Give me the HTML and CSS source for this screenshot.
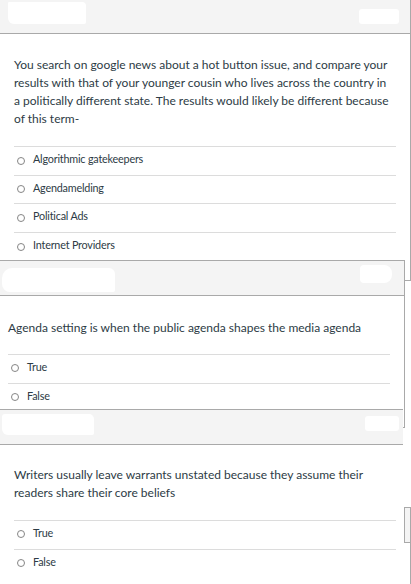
FILE: index.html
```html
<!DOCTYPE html>
<html>
<head>
<meta charset="utf-8">
<link rel="stylesheet" href="styles.css">
</head>
<body>
<div class="page">
  <div class="card card-1">
    <div class="card-head">
      <span class="blob blob-1a"></span>
      <span class="blob blob-1b"></span>
    </div>
    <div class="card-body">
      <p class="question">You search on google news about a hot button issue, and compare your results with that of your younger cousin who lives across the country in a politically different state. The results would likely be different because of this term-</p>
      <ul class="answers">
        <li class="answer"><span class="radio"></span><span>Algorithmic gatekeepers</span></li>
        <li class="answer"><span class="radio"></span><span>Agendamelding</span></li>
        <li class="answer"><span class="radio"></span><span>Political Ads</span></li>
        <li class="answer"><span class="radio"></span><span>Internet Providers</span></li>
      </ul>
    </div>
  </div>

  <div class="card card-2">
    <div class="card-head">
      <span class="blob blob-2a"></span>
      <span class="blob blob-2b"></span>
    </div>
    <div class="card-body">
      <p class="question">Agenda setting is when the public agenda shapes the media agenda</p>
      <ul class="answers">
        <li class="answer"><span class="radio"></span><span>True</span></li>
        <li class="answer"><span class="radio"></span><span>False</span></li>
      </ul>
    </div>
  </div>

  <div class="card card-3">
    <div class="card-head">
      <span class="blob blob-3a"></span>
      <span class="blob blob-3b"></span>
    </div>
    <div class="card-body">
      <p class="question">Writers usually leave warrants unstated because they assume their readers share their core beliefs</p>
      <ul class="answers">
        <li class="answer"><span class="radio"></span><span>True</span></li>
        <li class="answer"><span class="radio"></span><span>False</span></li>
      </ul>
    </div>
    <div class="peek"><div class="peek-head"></div></div>
  </div>
</div>
</body>
</html>
```

FILE: styles.css
```css
* { box-sizing: border-box; }

html, body {
  margin: 0;
  padding: 0;
  background: #fff;
}

body {
  font-family: Lato, "Open Sans", "Liberation Sans", sans-serif;
  color: #2d3b45;
}

.page {
  width: 411px;
  height: 584px;
  overflow: hidden;
  position: relative;
}

.card {
  position: relative;
  width: 412px;
  border: 1px solid #a9a9a9;
  background: #fff;
}

.card-head {
  height: 35px;
  background: #f4f4f4;
  border-bottom: 1px solid #a9a9a9;
  display: flex;
  justify-content: space-between;
  align-items: flex-start;
}

.blob {
  display: block;
  background: #fff;
}

.card-body {
  padding: 0 14px;
}

.question {
  margin: 0 4px 0 0;
  font-size: 12px;
  line-height: 18px;
}

.answers {
  list-style: none;
  margin: 0;
  padding: 0;
}

.answer {
  display: flex;
  align-items: center;
  gap: 8px;
  height: 28.7px;
  padding-top: 4px;
  padding-bottom: 7.7px;
  border-top: 1px solid #dcdcdc;
  font-size: 10.8px;
  line-height: 16px;
  letter-spacing: -0.2px;
}

.radio {
  width: 8px;
  height: 8px;
  margin-left: 3px;
  margin-top: 3px;
  border: 1px solid #858585;
  border-radius: 50%;
  flex: none;
}

/* card 1 */
.card-1 {
  margin-top: -2px;
  margin-left: -1px;
  z-index: 1;
}
.card-1 .card-body { padding-top: 22px; padding-bottom: 19px; }
.card-1 .answers { margin-top: 18px; }

.blob-1a {
  width: 78px;
  height: 22px;
  margin: 3px 0 0 8px;
  border-radius: 1px 4px 2px 6px;
}
.blob-1b {
  width: 40px;
  height: 15px;
  margin: 10px 11px 0 0;
  border-radius: 3px;
}

/* card 2 */
.card-2 {
  margin-top: -21px;
  margin-left: -7px;
  z-index: 2;
}
.card-2 .card-body { padding-top: 23px; padding-bottom: 15px; }
.card-2 .answers { margin-top: 17px; }
.card-2 .answer { height: 29px; }

.blob-2a {
  width: 113px;
  height: 24px;
  margin: 7px 0 0 8px;
  border-radius: 10px 6px 2px 8px;
}
.blob-2b {
  width: 32px;
  height: 18px;
  margin: 4px 12px 0 0;
  border-radius: 4px 8px 8px 4px;
}

/* card 3 */
.card-3 {
  margin-top: -19px;
  margin-left: -1px;
  z-index: 3;
  border: none;
  background: transparent;
}
.card-3 .card-head {
  margin-right: 8px;
  border-top: 1px solid #a9a9a9;
  border-left: 1px solid #a9a9a9;
  height: 36px;
}
.card-3 .card-body {
  background: #fff;
  padding-left: 15px;
  padding-top: 21px;
  padding-bottom: 20px;
}
.card-3 .answers { margin-top: 18px; margin-right: 1px; }
.card-3 .answer { height: 29px; }

.blob-3a {
  width: 92px;
  height: 21px;
  margin: 4px 0 0 2px;
  border-radius: 3px 5px 2px 6px;
}
.blob-3b {
  width: 34px;
  height: 15px;
  margin: 6px 4px 0 0;
  border-radius: 3px;
}

.peek {
  position: absolute;
  right: 0;
  top: 98px;
  bottom: 0;
  width: 7px;
  border-top: 1px solid #a9a9a9;
  border-right: 1px solid #a9a9a9;
}
.peek-head {
  height: 35px;
  background: #f4f4f4;
  border-left: 1px solid #a9a9a9;
  border-bottom: 1px solid #a9a9a9;
}
```
